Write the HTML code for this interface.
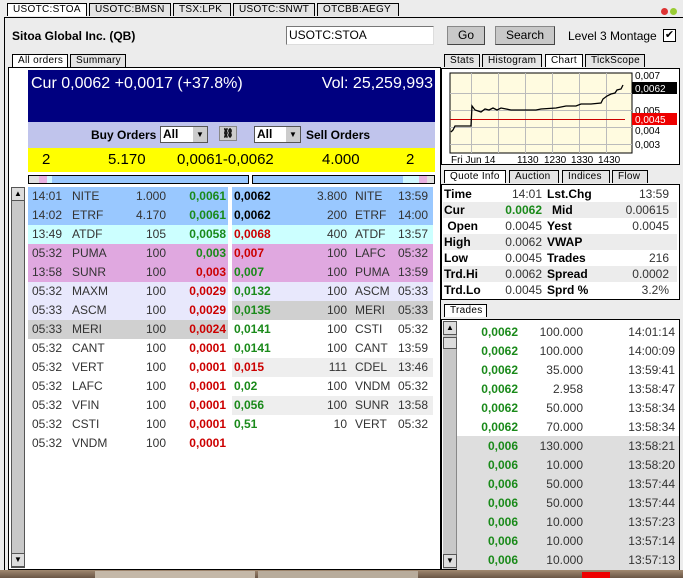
<!DOCTYPE html>
<html><head><meta charset="utf-8"><style>
*{margin:0;padding:0;box-sizing:border-box}
body{width:683px;height:578px;overflow:hidden;background:#ececec;font-family:"Liberation Sans",sans-serif;position:relative;color:#000}
.a{position:absolute}
.tab{position:absolute;height:13px;border:1px solid #000;border-bottom:none;background:#e4e4e4;font-size:10px;line-height:12px;padding-left:5px;letter-spacing:.3px}
.tab.s{background:#fff}
.box{position:absolute;border:1px solid #000;background:#fff}
.row{position:absolute;height:19px;font-size:12px;line-height:19px;color:#333}
.row span{position:absolute;white-space:nowrap}
.g{color:#1a8a1a;font-weight:bold}
.r{color:#cc0000;font-weight:bold}
.k{color:#000;font-weight:bold}
.btn{position:absolute;background:#c8c8c8;border:1px solid #888;border-right-color:#444;border-bottom-color:#444;font-size:12px;text-align:center;line-height:17px}
.q{position:absolute;left:1px;width:234px;height:16px;font-size:12px;line-height:16px}
.q span{position:absolute;white-space:nowrap}
.qb{font-weight:bold}
.tr{position:absolute;left:15px;width:221px;height:19px;font-size:12px;line-height:19px;color:#333}
.tr span{position:absolute;white-space:nowrap}
</style></head><body>
<div class="tab s" style="left:7px;top:3px;width:80px">USOTC:STOA</div>
<div class="tab" style="left:89px;top:3px;width:82px">USOTC:BMSN</div>
<div class="tab" style="left:173px;top:3px;width:58px">TSX:LPK</div>
<div class="tab" style="left:233px;top:3px;width:82px">USOTC:SNWT</div>
<div class="tab" style="left:317px;top:3px;width:82px">OTCBB:AEGY</div>
<div class="a" style="left:661px;top:8px;width:7px;height:7px;border-radius:50%;background:#d33"></div>
<div class="a" style="left:670px;top:8px;width:7px;height:7px;border-radius:50%;background:#9c3"></div>
<div class="a" style="left:4px;top:17px;width:679px;height:553px;border:1px solid #000;border-right:none;border-bottom:none"></div>
<div class="a" style="left:12px;top:29px;font-size:12px;font-weight:bold">Sitoa Global Inc. (QB)</div>
<div class="a" style="left:286px;top:26px;width:148px;height:19px;background:#fff;border:1px solid #777;border-right-color:#ddd;border-bottom-color:#ddd;font-size:12px;line-height:17px;padding-left:2px">USOTC:STOA</div>
<div class="btn" style="left:447px;top:26px;width:38px;height:19px">Go</div>
<div class="btn" style="left:495px;top:26px;width:60px;height:19px">Search</div>
<div class="a" style="left:568px;top:29px;font-size:12px">Level 3 Montage</div>
<div class="a" style="left:663px;top:29px;width:13px;height:13px;border:1px solid #000;background:#fff;font-size:11px;line-height:11px;text-align:center">✔</div>
<div class="tab s" style="left:12px;top:54px;width:56px">All orders</div>
<div class="tab" style="left:70px;top:54px;width:56px">Summary</div>
<div class="tab" style="left:444px;top:54px;width:36px">Stats</div>
<div class="tab" style="left:482px;top:54px;width:60px">Histogram</div>
<div class="tab s" style="left:545px;top:54px;width:38px">Chart</div>
<div class="tab" style="left:585px;top:54px;width:60px">TickScope</div>
<div class="box" style="left:8px;top:67px;width:433px;height:503px"></div>
<div class="a" style="left:28px;top:70px;width:407px;height:52px;background:#000080;color:#fff;font-size:16px">
<span class="a" style="left:3px;top:5px">Cur 0,0062 +0,0017 (+37.8%)</span><span class="a" style="right:2px;top:5px">Vol: 25,259,993</span></div>
<div class="a" style="left:28px;top:122px;width:407px;height:26px;background:#c0c4ec;font-size:12px;font-weight:bold">
<span class="a" style="left:63px;top:6px">Buy Orders</span>
<div class="a" style="left:132px;top:4px;width:48px;height:17px;background:#fff;border:1px solid #555;padding-left:2px;line-height:15px">All<div class="a" style="right:0;top:0;width:14px;height:15px;background:#ccc;font-size:8px;text-align:center">▼</div></div>
<div class="a" style="left:191px;top:4px;width:18px;height:15px;background:#ccc;border:1px solid #888;font-size:9px;text-align:center;line-height:13px">⛓</div>
<div class="a" style="left:226px;top:4px;width:47px;height:17px;background:#fff;border:1px solid #555;padding-left:2px;line-height:15px">All<div class="a" style="right:0;top:0;width:14px;height:15px;background:#ccc;font-size:8px;text-align:center">▼</div></div>
<span class="a" style="left:278px;top:6px">Sell Orders</span></div>
<div class="a" style="left:28px;top:148px;width:407px;height:24px;background:#ffff00;font-size:15px;line-height:24px">
<span class="a" style="left:14px">2</span><span class="a" style="left:80px">5.170</span><span class="a" style="left:149px">0,0061-0,0062</span><span class="a" style="left:294px">4.000</span><span class="a" style="left:378px">2</span></div>
<div class="a" style="left:28px;top:175px;width:221px;height:9px;border:1px solid #000;background:linear-gradient(90deg,#e0e0e0 0 10px,#e8b0e0 10px 18px,#d0f8ff 18px 23px,#99c8ff 23px)"></div>
<div class="a" style="left:252px;top:175px;width:183px;height:9px;border:1px solid #000;background:linear-gradient(90deg,#99c8ff 0 150px,#d0f8ff 150px 166px,#e8b0e0 166px 174px,#e0e0e0 174px)"></div>
<div class="a" style="left:11px;top:187px;width:14px;height:381px;background:#c8c8c8;border:1px solid #555"></div>
<div class="a" style="left:11px;top:187px;width:14px;height:14px;background:#ddd;border:1px solid #555;font-size:8px;text-align:center;line-height:12px">▲</div>
<div class="a" style="left:11px;top:553px;width:14px;height:14px;background:#ddd;border:1px solid #555;font-size:8px;text-align:center;line-height:12px">▼</div>
<div id="buy"></div>
<div class="box" style="left:441px;top:68px;width:239px;height:97px"></div>
<svg class="a" style="left:441px;top:68px" width="239" height="97">
<rect x="9" y="5" width="182" height="80" fill="#fffbe0" stroke="#000"/>
<g stroke="#bbb" stroke-width="1">
<line x1="30.5" y1="5" x2="30.5" y2="85"/><line x1="57.5" y1="5" x2="57.5" y2="85"/><line x1="84.5" y1="5" x2="84.5" y2="85"/><line x1="111.5" y1="5" x2="111.5" y2="85"/><line x1="138.5" y1="5" x2="138.5" y2="85"/><line x1="165.5" y1="5" x2="165.5" y2="85"/>
<line x1="9" y1="25.5" x2="191" y2="25.5"/><line x1="9" y1="42.5" x2="191" y2="42.5"/><line x1="9" y1="59.5" x2="191" y2="59.5"/><line x1="9" y1="76.5" x2="191" y2="76.5"/></g>
<line x1="9" y1="51.5" x2="184" y2="51.5" stroke="#c00"/>
<polyline fill="none" stroke="#000" stroke-width="1.3" points="10,64 12,62 14,58 27,58 30,58 31,38 34,42 40,44 44,41 48,42 52,40 56,42 60,40 70,42 80,42 95,42 100,41 115,40 125,38 135,38 140,36 150,36 160,35 162,31 166,28 170,26 174,25 176,22 180,21 182,17"/>
<text font-size="10" font-family="Liberation Sans" x="194" y="11">0,007</text>
<rect x="191" y="14" width="45" height="12" fill="#000"/><text fill="#fff" font-size="10" font-family="Liberation Sans" x="194" y="24">0,0062</text>
<text font-size="10" font-family="Liberation Sans" x="194" y="46">0,005</text>
<text font-size="10" font-family="Liberation Sans" x="194" y="66">0,004</text>
<rect x="191" y="45" width="45" height="12" fill="#e00"/><text fill="#fff" font-size="10" font-family="Liberation Sans" x="194" y="55">0,0045</text>
<text font-size="10" font-family="Liberation Sans" x="194" y="80">0,003</text>
<text font-size="10" font-family="Liberation Sans" x="10" y="95">Fri Jun 14</text>
<text font-size="10" font-family="Liberation Sans" x="76" y="95">1130</text>
<text font-size="10" font-family="Liberation Sans" x="103" y="95">1230</text>
<text font-size="10" font-family="Liberation Sans" x="130" y="95">1330</text>
<text font-size="10" font-family="Liberation Sans" x="157" y="95">1430</text>
</svg>
<div class="tab s" style="left:444px;top:170px;width:62px">Quote Info</div>
<div class="tab" style="left:509px;top:170px;width:50px">Auction</div>
<div class="tab" style="left:562px;top:170px;width:48px">Indices</div>
<div class="tab" style="left:612px;top:170px;width:36px">Flow</div>
<div class="box" style="left:441px;top:184px;width:239px;height:116px" id="quote"></div>
<div class="tab s" style="left:444px;top:304px;width:43px">Trades</div>
<div class="box" style="left:441px;top:319px;width:239px;height:251px" id="trades">
<div class="a" style="left:15px;top:116px;width:222px;height:134px;background:#dedede"></div>
<div class="a" style="left:1px;top:1px;width:14px;height:248px;background:#c8c8c8;border-right:1px solid #888"></div>
<div class="a" style="left:1px;top:1px;width:14px;height:14px;background:#ddd;border:1px solid #555;font-size:8px;text-align:center;line-height:12px">▲</div>
<div class="a" style="left:1px;top:17px;width:14px;height:12px;background:#ddd;border:1px solid #555"></div>
<div class="a" style="left:1px;top:234px;width:14px;height:14px;background:#ddd;border:1px solid #555;font-size:8px;text-align:center;line-height:12px">▼</div>
</div>
<div class="a" style="left:0;top:570px;width:683px;height:8px;background:linear-gradient(#a08870,#6a5646)"></div>
<div class="a" style="left:95px;top:571px;width:160px;height:7px;background:#c4b8a8"></div>
<div class="a" style="left:258px;top:571px;width:160px;height:7px;background:#b8ac9c"></div>
<div class="a" style="left:582px;top:572px;width:28px;height:6px;background:#e00"></div>
<script>
var buy=[["14:01","NITE","1.000","0,0061","g","#99c8ff"],["14:02","ETRF","4.170","0,0061","g","#99c8ff"],["13:49","ATDF","105","0,0058","g","#ccffff"],["05:32","PUMA","100","0,003","g","#e0a8e0"],["13:58","SUNR","100","0,003","r","#e0a8e0"],["05:32","MAXM","100","0,0029","r","#e8e8fc"],["05:33","ASCM","100","0,0029","r","#e8e8fc"],["05:33","MERI","100","0,0024","r","#d0d0d0"],["05:32","CANT","100","0,0001","r","#fff"],["05:32","VERT","100","0,0001","r","#fff"],["05:32","LAFC","100","0,0001","r","#fff"],["05:32","VFIN","100","0,0001","r","#fff"],["05:32","CSTI","100","0,0001","r","#fff"],["05:32","VNDM","100","0,0001","r","#fff"]];
var sell=[["0,0062","k","3.800","NITE","13:59","#99c8ff"],["0,0062","k","200","ETRF","14:00","#99c8ff"],["0,0068","r","400","ATDF","13:57","#ccffff"],["0,007","r","100","LAFC","05:32","#e0a8e0"],["0,007","g","100","PUMA","13:59","#e0a8e0"],["0,0132","g","100","ASCM","05:33","#e8e8fc"],["0,0135","g","100","MERI","05:33","#d0d0d0"],["0,0141","g","100","CSTI","05:32","#fff"],["0,0141","g","100","CANT","13:59","#fff"],["0,015","r","111","CDEL","13:46","#eee"],["0,02","g","100","VNDM","05:32","#fff"],["0,056","g","100","SUNR","13:58","#eee"],["0,51","g","10","VERT","05:32","#fff"]];
var h="";
buy.forEach(function(b,i){var y=187+i*19;h+='<div class="row" style="left:28px;top:'+y+'px;width:200px;background:'+b[5]+'"><span style="left:4px">'+b[0]+'</span><span style="left:44px">'+b[1]+'</span><span style="right:62px">'+b[2]+'</span><span class="'+b[4]+'" style="right:2px">'+b[3]+'</span></div>';});
sell.forEach(function(s,i){var y=187+i*19;h+='<div class="row" style="left:232px;top:'+y+'px;width:201px;background:'+s[5]+'"><span class="'+s[1]+'" style="left:2px">'+s[0]+'</span><span style="right:86px">'+s[2]+'</span><span style="left:123px">'+s[3]+'</span><span style="right:5px">'+s[4]+'</span></div>';});
document.getElementById("buy").outerHTML=h;
var q=[["Time","14:01","Lst.Chg","13:59"],["Cur","0.0062","Mid","0.00615"],[" Open","0.0045","Yest","0.0045"],["High","0.0062","VWAP",""],["Low","0.0045","Trades","216"],["Trd.Hi","0.0062","Spread","0.0002"],["Trd.Lo","0.0045","Sprd %","3.2%"]];
h="";q.forEach(function(r,i){h+='<div class="q" style="top:'+(1+i*16)+'px;background:'+(i%2?'#ececec':'#fff')+'"><span class="qb" style="left:1px">'+r[0].replace(' ','&nbsp;')+'</span><span style="right:135px;'+(i==1?'color:#1a8a1a;font-weight:bold':'color:#333')+'">'+r[1]+'</span><span class="qb" style="left:'+(i==1?109:104)+'px">'+r[2]+'</span><span style="right:8px;color:#333">'+r[3]+'</span></div>';});
document.getElementById("quote").innerHTML=h;
var t=[["0,0062","100.000","14:01:14"],["0,0062","100.000","14:00:09"],["0,0062","35.000","13:59:41"],["0,0062","2.958","13:58:47"],["0,0062","50.000","13:58:34"],["0,0062","70.000","13:58:34"],["0,006","130.000","13:58:21"],["0,006","10.000","13:58:20"],["0,006","50.000","13:57:44"],["0,006","50.000","13:57:44"],["0,006","10.000","13:57:23"],["0,006","10.000","13:57:14"],["0,006","10.000","13:57:13"]];
h="";t.forEach(function(r,i){h+='<div class="tr" style="top:'+(3+i*19)+'px"><span class="g" style="right:160px">'+r[0]+'</span><span style="right:95px">'+r[1]+'</span><span style="right:3px">'+r[2]+'</span></div>';});
document.getElementById("trades").insertAdjacentHTML("beforeend",h);
</script>
</body></html>
